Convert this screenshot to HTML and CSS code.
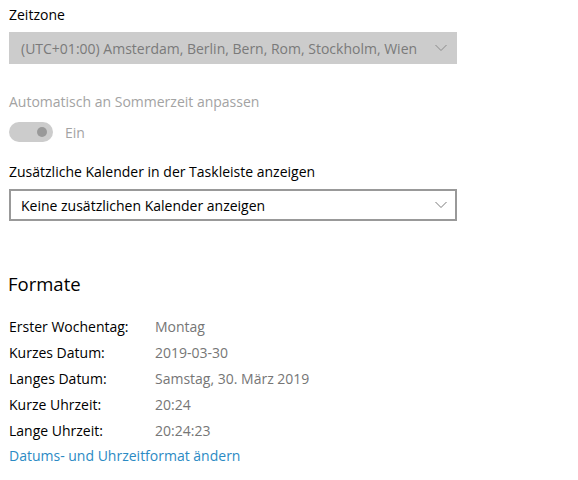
FILE: index.html
```html
<!DOCTYPE html>
<html lang="de">
<head>
<meta charset="utf-8">
<link rel="stylesheet" href="styles.css">
</head>
<body>
<div class="page">
  <div class="label label-first">Zeitzone</div>
  <div class="select select-disabled">
    <span class="select-text">(UTC+01:00) Amsterdam, Berlin, Bern, Rom, Stockholm, Wien</span>
    <svg class="chev" width="12" height="8" viewBox="0 0 12 8"><path d="M0.5 1 L6 6.5 L11.5 1" fill="none" stroke="currentColor" stroke-width="1"/></svg>
  </div>

  <div class="label label-disabled label-dst">Automatisch an Sommerzeit anpassen</div>
  <div class="toggle-row">
    <span class="toggle"><span class="knob"></span></span>
    <span class="toggle-text">Ein</span>
  </div>

  <div class="label label-cal">Zusätzliche Kalender in der Taskleiste anzeigen</div>
  <div class="select select-normal">
    <span class="select-text">Keine zusätzlichen Kalender anzeigen</span>
    <svg class="chev" width="12" height="8" viewBox="0 0 12 8"><path d="M0.5 1 L6 6.5 L11.5 1" fill="none" stroke="currentColor" stroke-width="1"/></svg>
  </div>

  <h2 class="heading">Formate</h2>
  <div class="formats">
    <div class="key">Erster Wochentag:</div><div class="val">Montag</div>
    <div class="key">Kurzes Datum:</div><div class="val">2019-03-30</div>
    <div class="key">Langes Datum:</div><div class="val">Samstag, 30. März 2019</div>
    <div class="key">Kurze Uhrzeit:</div><div class="val">20:24</div>
    <div class="key">Lange Uhrzeit:</div><div class="val">20:24:23</div>
  </div>
  <a class="link" href="#">Datums- und Uhrzeitformat ändern</a>
</div>
</body>
</html>
```
FILE: styles.css
```css
* { box-sizing: border-box; }
html, body { margin: 0; padding: 0; background: #ffffff; }
body {
  font-family: "Open Sans", "Noto Sans", sans-serif;
  font-size: 14px;
  color: #000000;
}
.page {
  padding: 5px 0 0 9px;
  width: 578px;
  height: 480px;
  overflow: hidden;
}
.label {
  line-height: 20px;
  height: 20px;
}
.label-first { margin-top: 0; }
.label-disabled { color: #a3a3a3; }
.label-dst { margin-top: 28px; }
.label-cal { margin-top: 20px; }
.select {
  width: 448px;
  height: 32px;
  margin-top: 7px;
  display: flex;
  align-items: center;
  justify-content: space-between;
  padding: 0 10px 0 12px;
}
.select-disabled {
  background: #cccccc;
  color: #7a7a7a;
}
.select-normal {
  border: 2px solid #999999;
  padding-left: 10px;
  padding-right: 8px;
  color: #000000;
}
.select-normal .chev { color: #7a7a7a; }
.select-disabled .chev { color: #8a8a8a; }
.toggle-row {
  display: flex;
  align-items: center;
  margin-top: 10px;
  height: 20px;
}
.toggle {
  width: 44px;
  height: 20px;
  border-radius: 10px;
  background: #cccccc;
  display: flex;
  align-items: center;
  justify-content: flex-end;
  padding-right: 6px;
}
.knob {
  width: 10px;
  height: 10px;
  border-radius: 50%;
  background: #999999;
}
.toggle-text {
  margin-left: 12px;
  color: #a3a3a3;
}
.heading {
  margin: 49px 0 0 -1px;
  font-size: 18.5px;
  font-weight: normal;
  line-height: 28px;
}
.formats {
  margin-top: 15px;
  display: grid;
  grid-template-columns: 146px auto;
  grid-auto-rows: 26px;
  align-items: center;
}
.val { color: #767676; }
.link {
  display: block;
  margin-top: 0;
  line-height: 26px;
  color: #2b8ac4;
  text-decoration: none;
}
```
